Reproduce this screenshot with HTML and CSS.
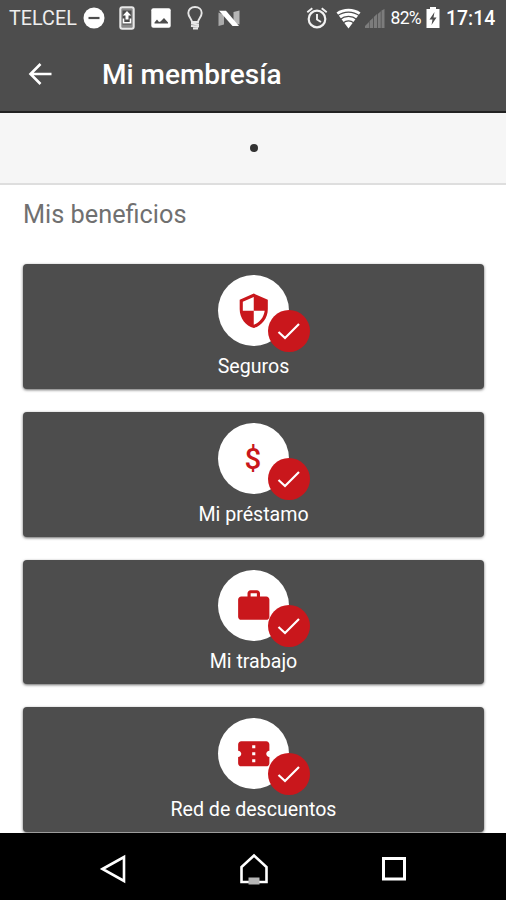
FILE: index.html
```html
<!DOCTYPE html>
<html lang="es">

<head>
  <meta charset="UTF-8">
  <meta name="viewport" content="width=device-width, initial-scale=1.0">
  <title>Mi membresía</title>
  <link rel="stylesheet" href="styles.css">
</head>

<body>
  <svg class="defs" width="0" height="0">
    <symbol id="check" viewBox="0 0 42 42">
      <path d="M10.5 22l6.5 6L31 14" fill="none" stroke="#fff" stroke-width="2.2" />
    </symbol>
  </svg>
  <div class="screen">
    <div class="status">
      <span class="carrier">TELCEL</span>
      <svg class="dnd" width="22" height="22" viewBox="0 0 22 22">
        <circle cx="11" cy="11" r="10.5" fill="#fff" />
        <path d="M5.5 11h11" stroke="#4d4d4d" stroke-width="2.2" />
      </svg>
      <svg class="update" width="16" height="24" viewBox="0 0 16 24">
        <rect x="1.3" y="1.3" width="13.4" height="21.4" rx="2" fill="#888" stroke="#e8e8e8" stroke-width="2" />
        <rect x="3.5" y="4.5" width="9" height="14" fill="#4a4a4a" />
        <path d="M8 5L3.800 9.500h2.700v4h3v-4h2.700z" fill="#fff" />
        <path d="M4.500 12.500v4.200h7v-4.200" fill="none" stroke="#fff" stroke-width="1.6" />
      </svg>
      <svg class="photo" width="20" height="20" viewBox="0 0 20 20">
        <rect x=".3" y=".3" width="19.4" height="19.4" rx="2" fill="#fff" />
        <path d="M3.500 15.500v-1l2.500-3 2 2.500 1.500-.5 3.500-3.500 4 4.500v1z" fill="#4d4d4d" />
      </svg>
      <svg class="bulb" width="16" height="24" viewBox="0 0 16 24">
        <path d="M5 16c0-3-3.700-5-3.700-9C1.300 3.500 4 1 8 1s6.700 2.500 6.700 6c0 4-3.700 6-3.700 9z" fill="none" stroke="#e6e6e6" stroke-width="1.9" />
        <path d="M4 17.500l8 1M4 20l8 .6M6 22.600h5" stroke="#e6e6e6" stroke-width="2" />
      </svg>
      <svg class="nougat" width="22" height="17" viewBox="0 0 22 17">
        <path d="M.5 2.500L6 5v9.500L.5 16z" fill="#aaa" />
        <path d="M15.500 2L21.500.5v14L15.500 13z" fill="#b5b5b5" />
        <path d="M1 .8h7L21 16h-6.500z" fill="#fff" />
      </svg>
      <svg class="alarm" width="22" height="22" viewBox="0 0 22 22">
        <circle cx="11" cy="12" r="8.3" fill="none" stroke="#f2f2f2" stroke-width="2.2" />
        <path d="M11 7v5.500l4 2.500M1.300 5.300l5-4M20.700 5.300l-5-4" fill="none" stroke="#f2f2f2" stroke-width="1.9" />
      </svg>
      <svg class="wifi" width="25" height="21" viewBox="0 0 25 21">
        <path d="M12.500 20.500L.5 4.500C7-.5 18-.5 24.500 4.500z" fill="#fff" />
        <path d="M1.500 7.800c6.500-5 15.500-5 22 0M4 11.400c5.200-4 11.800-4 17 0M7 15c3.500-2.600 7.500-2.600 11 0" fill="none" stroke="#4d4d4d" stroke-width="1.2" />
      </svg>
      <svg class="signal" width="20" height="19" viewBox="0 0 20 19">
        <path d="M0 19v-2l4-4v6zM4.600 19v-7l3.400-3v10zM8.800 19V8l3.200-3v14zM12.800 19V5l3-2.700V19zM16.500 19V1.500L19.500 0v19z" fill="#7c7c7c" />
      </svg>
      <span class="percent">82%</span>
      <svg class="battery" width="14" height="21" viewBox="0 0 14 21">
        <path d="M4 0h6v2h3.500v19H.5V2H4z" fill="#fff" />
        <path d="M8.500 5L3.500 12.500h3L5.500 18l5-7.500h-3z" fill="#4d4d4d" />
      </svg>
      <span class="clock">17:14</span>
    </div>

    <div class="toolbar">
      <svg class="back" width="24" height="24" viewBox="0 0 24 24">
        <path d="M23.500 12H2.500M12.500 2L2.500 12l10 10" fill="none" stroke="#fff" stroke-width="2.6" />
      </svg>
      <h1>Mi membresía</h1>
    </div>

    <div class="pager"><span class="dot"></span></div>

    <div class="content">
      <h2>Mis beneficios</h2>

      <div class="card">
        <div class="icon">
          <svg width="37.5" height="37.5" viewBox="0 0 24 24">
            <path d="M12 1L3 5v6c0 5.550 3.840 10.740 9 12 5.160-1.260 9-6.450 9-12V5l-9-4zm0 10.990h7c-.53 4.120-3.280 7.790-7 8.940V12H5V6.300l7-3.110v8.800z" />
          </svg>
          <svg class="badge"><use href="#check" /></svg>
        </div>
        <p>Seguros</p>
      </div>

      <div class="card">
        <div class="icon">
          <span class="money">$</span>
          <svg class="badge"><use href="#check" /></svg>
        </div>
        <p>Mi préstamo</p>
      </div>

      <div class="card">
        <div class="icon">
          <svg width="37.5" height="37.5" viewBox="0 0 24 24">
            <path fill-rule="evenodd" d="M20 6h-4V4c0-1.110-.89-2-2-2h-4c-1.110 0-2 .89-2 2v2H4c-1.110 0-2 .89-2 2v11c0 1.110.89 2 2 2h16c1.110 0 2-.89 2-2V8c0-1.110-.89-2-2-2zm-6 0h-4V4h4v2z" />
          </svg>
          <svg class="badge"><use href="#check" /></svg>
        </div>
        <p>Mi trabajo</p>
      </div>

      <div class="card">
        <div class="icon">
          <svg width="37.5" height="37.5" viewBox="0 0 24 24">
            <path d="M22 10V6c0-1.110-.9-2-2-2H4c-1.100 0-1.990.89-1.990 2v4c1.100 0 1.990.9 1.990 2s-.89 2-2 2v4c0 1.100.9 2 2 2h16c1.100 0 2-.9 2-2v-4c-1.100 0-2-.9-2-2s.9-2 2-2zm-9 7.500h-2v-2h2v2zm0-4.500h-2v-2h2v2zm0-4.500h-2v-2h2v2z" />
          </svg>
          <svg class="badge"><use href="#check" /></svg>
        </div>
        <p>Red de descuentos</p>
      </div>
    </div>

    <div class="navbar">
      <svg width="28" height="30" viewBox="0 0 28 30">
        <path d="M3.500 15L25 3v24z" fill="none" stroke="#fff" stroke-width="2.6" />
      </svg>
      <svg width="30" height="32" viewBox="0 0 30 32">
        <path d="M2.500 29V14L15 2.500 27.500 14v15z" fill="none" stroke="#fff" stroke-width="2.6" />
        <path d="M9.500 24.500h11v7h-11z" fill="#b5b5b5" />
      </svg>
      <svg width="26" height="26" viewBox="0 0 26 26">
        <rect x="2.5" y="2.5" width="21" height="20.5" fill="none" stroke="#fff" stroke-width="3" />
      </svg>
    </div>
  </div>
</body>

</html>
```
FILE: styles.css
```css
* {
  box-sizing: border-box;
}

body {
  margin: 0;
  background: #ffffff;
  font-family: Roboto, "Liberation Sans", sans-serif;
}

h1,
h2,
p {
  margin: 0;
  font-weight: 400;
  white-space: nowrap;
}

.defs {
  display: block;
}

.screen {
  display: flex;
  flex-direction: column;
  width: 506px;
  height: 900px;
  overflow: hidden;
}

/* status bar */
.status {
  display: flex;
  flex: none;
  align-items: center;
  height: 36px;
  padding-left: 9px;
  background: #4d4d4d;
  color: #ffffff;
  white-space: nowrap;
}

.status svg {
  flex: none;
}

.carrier {
  width: 74px;
  font-size: 19.8px;
  color: #eeeeee;
}

.update {
  margin-left: 14px;
}

.photo {
  margin-left: 16px;
}

.bulb {
  margin-left: 16px;
}

.nougat {
  margin-left: 15px;
}

.alarm {
  margin-left: 65.5px;
}

.wifi {
  margin-left: 8px;
}

.signal {
  margin-left: 4px;
}

.percent {
  width: 35px;
  margin-left: 6px;
  font-size: 17.5px;
  letter-spacing: -0.7px;
}

.battery {
  margin-top: -2px;
}

.clock {
  margin-left: 6.5px;
  font-size: 19.4px;
  font-weight: 500;
}

/* toolbar */
.toolbar {
  display: flex;
  flex: none;
  align-items: center;
  height: 77px;
  padding: 1px 0 0 28px;
  background: #4d4d4d;
  border-bottom: 2px solid #222222;
  color: #ffffff;
}

.toolbar h1 {
  margin-left: 50px;
  padding-top: 1px;
  font-size: 28px;
  font-weight: 500;
}

.pager {
  display: flex;
  flex: none;
  align-items: center;
  justify-content: center;
  height: 72px;
  background: #f6f6f6;
  border-bottom: 2px solid #dedede;
}

.dot {
  width: 8px;
  height: 8px;
  margin-left: 1px;
  background: #333333;
  border-radius: 50%;
}

/* benefits */
.content {
  flex: 1;
  min-height: 0;
  padding: 0 22px 0 23px;
  overflow: hidden;
}

.content h2 {
  height: 79.4px;
  padding-top: 15px;
  font-size: 25.3px;
  line-height: 30px;
  color: #707070;
}

.card {
  display: flex;
  flex-direction: column;
  align-items: center;
  height: 124.7px;
  margin-bottom: 23px;
  padding-top: 10.5px;
  background: #4d4d4d;
  border-radius: 4px;
  box-shadow: 0 1px 3px rgba(0, 0, 0, 0.6);
}

.icon {
  position: relative;
  display: flex;
  align-items: center;
  justify-content: center;
  width: 71px;
  height: 71px;
  background: #ffffff;
  border-radius: 50%;
  fill: #c9171c;
}

.badge {
  position: absolute;
  right: -21px;
  bottom: -6px;
  width: 42px;
  height: 42px;
  background: #c9171c;
  border-radius: 50%;
}

.money {
  margin-right: 1px;
  padding-top: 2px;
  font-size: 29.5px;
  font-weight: 500;
  line-height: 36px;
  color: #c9171c;
}

.card p {
  margin-top: 9px;
  font-size: 19.6px;
  line-height: 24px;
  color: #ffffff;
}

/* navigation bar */
.navbar {
  display: flex;
  flex: none;
  align-items: center;
  justify-content: space-between;
  height: 67px;
  padding: 4px 99px 0 99px;
  background: #000000;
}
```
